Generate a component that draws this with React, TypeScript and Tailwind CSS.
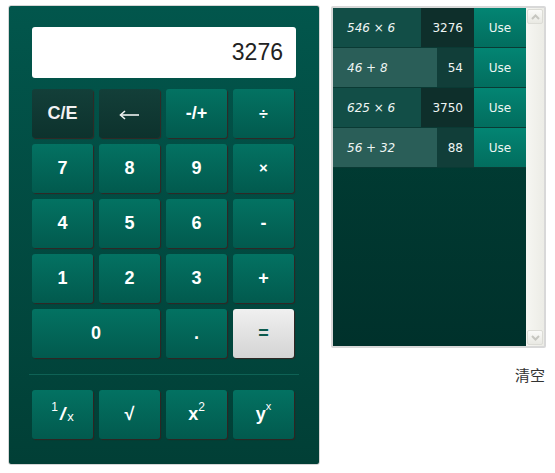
import type { ReactNode } from "react";

const history = [
  { expr: "546 × 6", result: "3276", alt: false },
  { expr: "46 + 8", result: "54", alt: true },
  { expr: "625 × 6", result: "3750", alt: false },
  { expr: "56 + 32", result: "88", alt: true },
];

type Kind = "num" | "dark" | "eq";

function Key({ kind = "num", wide = false, children }: { kind?: Kind; wide?: boolean; children: ReactNode }) {
  const tone =
    kind === "dark"
      ? "bg-gradient-to-b from-[#133f39] to-[#0d322d] text-[#f2f2f2]"
      : kind === "eq"
        ? "bg-gradient-to-b from-[#f0f0f0] to-[#d4d4d4] text-[#0b5a4c]"
        : "bg-gradient-to-b from-[#037262] to-[#025a4e] text-white";
  return (
    <button
      className={`flex h-[49px] items-center justify-center rounded-[3px] text-[18px] font-bold shadow-[1px_1px_1px_rgba(70,25,25,0.75)] ${tone} ${wide ? "col-span-2" : ""}`}
    >
      {children}
    </button>
  );
}

function Calculator() {
  return (
    <div className="flex h-[460px] w-[312px] flex-col rounded-[3px] border border-[#d6d6d6] bg-gradient-to-b from-[#02564c] to-[#013f36] px-[23px] pt-[21px] font-['Liberation_Sans',Arial,sans-serif]">
      <div className="flex h-[51px] w-[264px] items-center justify-end rounded-[3px] bg-white pr-[13px] text-[23px] text-[#222]">
        3276
      </div>
      <div className="mt-[11px] grid w-[262px] grid-cols-4 gap-[6px]">
        <Key kind="dark">C/E</Key>
        <Key kind="dark">
          <svg width="21" height="10" viewBox="0 0 21 10" className="mt-[2px]">
            <path d="M2 5 H20" stroke="#eef2f1" strokeWidth="1.6" />
            <path d="M6 1 L1.5 5 L6 9" fill="none" stroke="#eef2f1" strokeWidth="1.6" />
          </svg>
        </Key>
        <Key>-/+</Key>
        <Key>
          <span className="text-[16px]">÷</span>
        </Key>
        <Key>7</Key>
        <Key>8</Key>
        <Key>9</Key>
        <Key>
          <span className="text-[15px]">×</span>
        </Key>
        <Key>4</Key>
        <Key>5</Key>
        <Key>6</Key>
        <Key>-</Key>
        <Key>1</Key>
        <Key>2</Key>
        <Key>3</Key>
        <Key>+</Key>
        <Key wide>0</Key>
        <Key>.</Key>
        <Key kind="eq">=</Key>
      </div>
      <div className="-mx-[3px] mt-[16px] h-px bg-[#0e6255]" />
      <div className="mt-[15px] grid w-[262px] grid-cols-4 gap-[6px]">
        <Key>
          <span className="flex items-start font-normal">
            <span className="mt-[-2px] text-[12px]">1</span>
            <span className="mx-[2px] text-[19px] font-bold italic">/</span>
            <span className="mt-[7px] text-[13px]">x</span>
          </span>
        </Key>
        <Key>√</Key>
        <Key>
          <span className="flex items-start">
            x<span className="mt-[-3px] text-[12px] font-normal">2</span>
          </span>
        </Key>
        <Key>
          <span className="flex items-start">
            y<span className="mt-[-3px] text-[11px] font-normal">x</span>
          </span>
        </Key>
      </div>
    </div>
  );
}

function Chevron({ up }: { up: boolean }) {
  return (
    <div className="flex h-[15px] w-[16px] items-center justify-center rounded-[2px] border border-[#dcdcd6] bg-gradient-to-b from-[#fafaf8] to-[#e9e9e3]">
      <svg width="9" height="6" viewBox="0 0 9 6">
        <path
          d={up ? "M1 5 L4.5 1.5 L8 5" : "M1 1 L4.5 4.5 L8 1"}
          fill="none"
          stroke="#c6c6c0"
          strokeWidth="2"
        />
      </svg>
    </div>
  );
}

function History() {
  return (
    <div className="mt-[1px] flex w-[215px] flex-col items-end">
      <div className="flex h-[342px] w-[215px] overflow-hidden rounded-[2px] border-2 border-[#d8d8d8] font-['DejaVu_Sans',Verdana,sans-serif] text-[12px]">
        <div className="flex flex-1 flex-col bg-gradient-to-b from-[#014238] to-[#00312b]">
          {history.map((h) => (
            <div key={h.expr} className="flex h-[40px] border-b border-[#0a3a34] text-[#eef5f3]">
              <div
                className={`flex flex-1 items-center pl-[14px] italic ${h.alt ? "bg-[#2a5e58]" : "bg-[#124e47]"}`}
              >
                {h.expr}
              </div>
              <div
                className={`flex items-center px-[11px] ${h.alt ? "bg-[#113e39]" : "bg-[#0e2f2b]"}`}
              >
                {h.result}
              </div>
              <div className="flex w-[52px] items-center justify-center bg-gradient-to-b from-[#038573] to-[#026d5e]">
                Use
              </div>
            </div>
          ))}
        </div>
        <div className="flex w-[18px] flex-col items-center justify-between bg-gradient-to-r from-[#f6f6f2] to-[#ecece6] py-[1px]">
          <Chevron up />
          <Chevron up={false} />
        </div>
      </div>
      <div className="mt-[19px] pr-[1px] font-['Noto_Sans_CJK_SC',sans-serif] text-[15px] leading-none text-[#333]">
        清空
      </div>
    </div>
  );
}

export default function App() {
  return (
    <div className="flex h-[473px] w-[555px] items-start gap-[11px] bg-white pl-[8px] pt-[5px]">
      <Calculator />
      <History />
    </div>
  );
}
